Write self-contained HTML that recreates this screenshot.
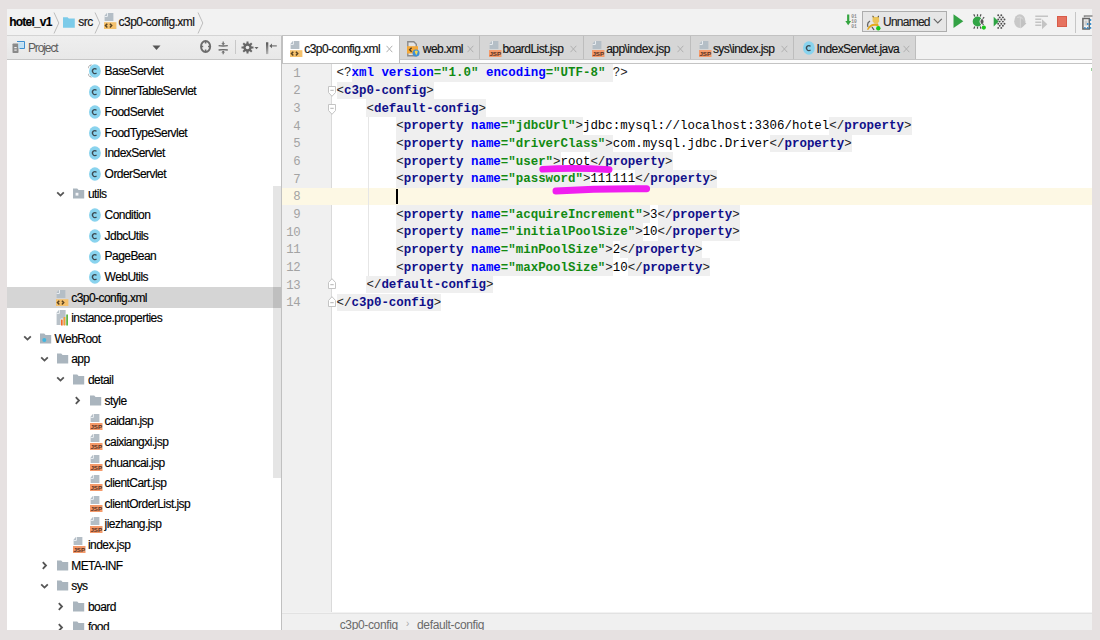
<!DOCTYPE html><html><head><meta charset="utf-8"><style>
*{margin:0;padding:0;box-sizing:border-box}
html,body{width:1100px;height:640px;overflow:hidden;background:#e6e1e1;font-family:"Liberation Sans",sans-serif}
.a{position:absolute}
.ui{font-family:"Liberation Sans",sans-serif;font-size:12px;letter-spacing:-0.55px;color:#000;-webkit-text-stroke:0.15px currentColor;white-space:nowrap;line-height:14px}
.code{font-family:"Liberation Mono",monospace;font-size:12.445px;white-space:pre;line-height:17.65px;color:#000}
.tn{color:#10108a;font-weight:bold}
.an{color:#0000ff;font-weight:bold}
.av{color:#128a12;font-weight:bold}
.br{color:#222}
.ln{font-family:"Liberation Mono",monospace;font-size:12.3px;letter-spacing:-0.45px;color:#a3a3a3;line-height:17.65px;text-align:right;width:20px}
</style></head><body>
<div class="a" style="left:7px;top:9px;width:1085px;height:621px;background:#f2f2f2"></div>
<div class="a" style="left:7px;top:35px;width:275px;height:1px;background:#d4d4d4"></div>
<div class="a" style="left:282px;top:35px;width:810px;height:1px;background:#c2c2c2"></div>
<div class="a" style="left:7px;top:36px;width:275px;height:23px;background:linear-gradient(#eeeeee,#e8e8e8)"></div>
<div class="a" style="left:7px;top:59px;width:275px;height:1px;background:#c6c6c6"></div>
<div class="a" style="left:7px;top:60px;width:275px;height:570px;background:#fff"></div>
<div class="a" style="left:281px;top:36px;width:1px;height:594px;background:#c0c0c0"></div>
<div class="a" style="left:282px;top:36px;width:810px;height:27px;background:#f2f2f2"></div>
<div class="a" style="left:282px;top:63px;width:810px;height:1px;background:#c4c4c4"></div>
<div class="a" style="left:282px;top:64px;width:810px;height:548px;background:#fff"></div>
<div class="a" style="left:282px;top:64px;width:49px;height:548px;background:#f0f0f0"></div>
<div class="a" style="left:331px;top:64px;width:1px;height:548px;background:#dadada"></div>
<div class="a" style="left:282px;top:613px;width:810px;height:17px;background:#f0f0f0;border-top:1px solid #e2e2e2"></div>
<div class="a" style="left:282px;top:187.60px;width:810px;height:17.65px;background:#fdf8e4"></div>
<div class="a" style="left:351.53px;top:64.05px;width:261.34px;height:17.65px;background:#efefef"></div>
<div class="a" style="left:336.60px;top:81.70px;width:97.07px;height:17.65px;background:#efefef"></div>
<div class="a" style="left:366.47px;top:99.35px;width:119.47px;height:17.65px;background:#efefef"></div>
<div class="a" style="left:396.34px;top:117.00px;width:186.67px;height:17.65px;background:#efefef"></div>
<div class="a" style="left:829.42px;top:117.00px;width:82.14px;height:17.65px;background:#efefef"></div>
<div class="a" style="left:396.34px;top:134.65px;width:216.54px;height:17.65px;background:#efefef"></div>
<div class="a" style="left:769.69px;top:134.65px;width:82.14px;height:17.65px;background:#efefef"></div>
<div class="a" style="left:396.34px;top:152.30px;width:164.27px;height:17.65px;background:#efefef"></div>
<div class="a" style="left:590.48px;top:152.30px;width:82.14px;height:17.65px;background:#efefef"></div>
<div class="a" style="left:396.34px;top:169.95px;width:194.14px;height:17.65px;background:#efefef"></div>
<div class="a" style="left:635.28px;top:169.95px;width:82.14px;height:17.65px;background:#efefef"></div>
<div class="a" style="left:396.34px;top:205.25px;width:253.88px;height:17.65px;background:#efefef"></div>
<div class="a" style="left:657.68px;top:205.25px;width:82.14px;height:17.65px;background:#efefef"></div>
<div class="a" style="left:396.34px;top:222.90px;width:246.41px;height:17.65px;background:#efefef"></div>
<div class="a" style="left:657.68px;top:222.90px;width:82.14px;height:17.65px;background:#efefef"></div>
<div class="a" style="left:396.34px;top:240.55px;width:216.54px;height:17.65px;background:#efefef"></div>
<div class="a" style="left:620.35px;top:240.55px;width:82.14px;height:17.65px;background:#efefef"></div>
<div class="a" style="left:396.34px;top:258.20px;width:216.54px;height:17.65px;background:#efefef"></div>
<div class="a" style="left:627.81px;top:258.20px;width:82.14px;height:17.65px;background:#efefef"></div>
<div class="a" style="left:366.47px;top:275.85px;width:126.94px;height:17.65px;background:#efefef"></div>
<div class="a" style="left:336.60px;top:293.50px;width:104.54px;height:17.65px;background:#efefef"></div>
<div class="a code" style="left:336.6px;top:65.45px"><span class="br">&lt;?</span><span class="an">xml</span> <span class="an">version</span><span class="av">=&quot;1.0&quot;</span> <span class="an">encoding</span><span class="av">=&quot;UTF-8&quot;</span> <span class="br">?&gt;</span></div>
<div class="a ln" style="left:279.2px;top:65.75px;width:21px">1</div>
<div class="a code" style="left:336.6px;top:83.10px"><span class="br">&lt;</span><span class="tn">c3p0-config</span><span class="br">&gt;</span></div>
<div class="a ln" style="left:279.2px;top:83.40px;width:21px">2</div>
<div class="a code" style="left:336.6px;top:100.75px">    <span class="br">&lt;</span><span class="tn">default-config</span><span class="br">&gt;</span></div>
<div class="a ln" style="left:279.2px;top:101.05px;width:21px">3</div>
<div class="a code" style="left:336.6px;top:118.40px">        <span class="br">&lt;</span><span class="tn">property</span> <span class="an">name</span><span class="av">=&quot;jdbcUrl&quot;</span><span class="br">&gt;</span>jdbc:mysql://localhost:3306/hotel<span class="br">&lt;/</span><span class="tn">property</span><span class="br">&gt;</span></div>
<div class="a ln" style="left:279.2px;top:118.70px;width:21px">4</div>
<div class="a code" style="left:336.6px;top:136.05px">        <span class="br">&lt;</span><span class="tn">property</span> <span class="an">name</span><span class="av">=&quot;driverClass&quot;</span><span class="br">&gt;</span>com.mysql.jdbc.Driver<span class="br">&lt;/</span><span class="tn">property</span><span class="br">&gt;</span></div>
<div class="a ln" style="left:279.2px;top:136.35px;width:21px">5</div>
<div class="a code" style="left:336.6px;top:153.70px">        <span class="br">&lt;</span><span class="tn">property</span> <span class="an">name</span><span class="av">=&quot;user&quot;</span><span class="br">&gt;</span>root<span class="br">&lt;/</span><span class="tn">property</span><span class="br">&gt;</span></div>
<div class="a ln" style="left:279.2px;top:154.00px;width:21px">6</div>
<div class="a code" style="left:336.6px;top:171.35px">        <span class="br">&lt;</span><span class="tn">property</span> <span class="an">name</span><span class="av">=&quot;password&quot;</span><span class="br">&gt;</span>111111<span class="br">&lt;/</span><span class="tn">property</span><span class="br">&gt;</span></div>
<div class="a ln" style="left:279.2px;top:171.65px;width:21px">7</div>
<div class="a code" style="left:336.6px;top:189.00px"></div>
<div class="a ln" style="left:279.2px;top:189.30px;width:21px">8</div>
<div class="a code" style="left:336.6px;top:206.65px">        <span class="br">&lt;</span><span class="tn">property</span> <span class="an">name</span><span class="av">=&quot;acquireIncrement&quot;</span><span class="br">&gt;</span>3<span class="br">&lt;/</span><span class="tn">property</span><span class="br">&gt;</span></div>
<div class="a ln" style="left:279.2px;top:206.95px;width:21px">9</div>
<div class="a code" style="left:336.6px;top:224.30px">        <span class="br">&lt;</span><span class="tn">property</span> <span class="an">name</span><span class="av">=&quot;initialPoolSize&quot;</span><span class="br">&gt;</span>10<span class="br">&lt;/</span><span class="tn">property</span><span class="br">&gt;</span></div>
<div class="a ln" style="left:279.2px;top:224.60px;width:21px">10</div>
<div class="a code" style="left:336.6px;top:241.95px">        <span class="br">&lt;</span><span class="tn">property</span> <span class="an">name</span><span class="av">=&quot;minPoolSize&quot;</span><span class="br">&gt;</span>2<span class="br">&lt;/</span><span class="tn">property</span><span class="br">&gt;</span></div>
<div class="a ln" style="left:279.2px;top:242.25px;width:21px">11</div>
<div class="a code" style="left:336.6px;top:259.60px">        <span class="br">&lt;</span><span class="tn">property</span> <span class="an">name</span><span class="av">=&quot;maxPoolSize&quot;</span><span class="br">&gt;</span>10<span class="br">&lt;/</span><span class="tn">property</span><span class="br">&gt;</span></div>
<div class="a ln" style="left:279.2px;top:259.90px;width:21px">12</div>
<div class="a code" style="left:336.6px;top:277.25px">    <span class="br">&lt;/</span><span class="tn">default-config</span><span class="br">&gt;</span></div>
<div class="a ln" style="left:279.2px;top:277.55px;width:21px">13</div>
<div class="a code" style="left:336.6px;top:294.90px"><span class="br">&lt;/</span><span class="tn">c3p0-config</span><span class="br">&gt;</span></div>
<div class="a ln" style="left:279.2px;top:295.20px;width:21px">14</div>
<div class="a" style="left:395.5px;top:188.60px;width:2px;height:15.65px;background:#000"></div>
<div class="a" style="left:7px;top:60px;width:274px;height:570px;overflow:hidden">
<svg class="a" style="left:82.40px;top:4.00px" width="12" height="14" viewBox="0 0 12 14"><ellipse cx="5.9" cy="7" rx="5.9" ry="6.8" fill="#89d3ee"/><path d="M7.5 5.4 A2.3 2.5 0 1 0 7.5 8.8" stroke="#3b4a52" stroke-width="1.3" fill="none"/></svg>
<svg class="a" style="left:81.30px;top:4.00px" width="5" height="14" viewBox="0 0 5 14"><path d="M3.5 0.8 A5.6 6.4 0 0 0 3.5 13.2" stroke="#9a9a9a" stroke-width="1" fill="none"/></svg>
<div class="a ui" style="left:97.60px;top:3.74px">BaseServlet</div>
<svg class="a" style="left:82.40px;top:24.62px" width="12" height="14" viewBox="0 0 12 14"><ellipse cx="5.9" cy="7" rx="5.9" ry="6.8" fill="#89d3ee"/><path d="M7.5 5.4 A2.3 2.5 0 1 0 7.5 8.8" stroke="#3b4a52" stroke-width="1.3" fill="none"/></svg>
<div class="a ui" style="left:97.60px;top:24.36px">DinnerTableServlet</div>
<svg class="a" style="left:82.40px;top:45.24px" width="12" height="14" viewBox="0 0 12 14"><ellipse cx="5.9" cy="7" rx="5.9" ry="6.8" fill="#89d3ee"/><path d="M7.5 5.4 A2.3 2.5 0 1 0 7.5 8.8" stroke="#3b4a52" stroke-width="1.3" fill="none"/></svg>
<div class="a ui" style="left:97.60px;top:44.98px">FoodServlet</div>
<svg class="a" style="left:82.40px;top:65.86px" width="12" height="14" viewBox="0 0 12 14"><ellipse cx="5.9" cy="7" rx="5.9" ry="6.8" fill="#89d3ee"/><path d="M7.5 5.4 A2.3 2.5 0 1 0 7.5 8.8" stroke="#3b4a52" stroke-width="1.3" fill="none"/></svg>
<div class="a ui" style="left:97.60px;top:65.60px">FoodTypeServlet</div>
<svg class="a" style="left:82.40px;top:86.48px" width="12" height="14" viewBox="0 0 12 14"><ellipse cx="5.9" cy="7" rx="5.9" ry="6.8" fill="#89d3ee"/><path d="M7.5 5.4 A2.3 2.5 0 1 0 7.5 8.8" stroke="#3b4a52" stroke-width="1.3" fill="none"/></svg>
<div class="a ui" style="left:97.60px;top:86.22px">IndexServlet</div>
<svg class="a" style="left:82.40px;top:107.10px" width="12" height="14" viewBox="0 0 12 14"><ellipse cx="5.9" cy="7" rx="5.9" ry="6.8" fill="#89d3ee"/><path d="M7.5 5.4 A2.3 2.5 0 1 0 7.5 8.8" stroke="#3b4a52" stroke-width="1.3" fill="none"/></svg>
<div class="a ui" style="left:97.60px;top:106.84px">OrderServlet</div>
<svg class="a" style="left:49.20px;top:130.73px" width="9" height="7" viewBox="0 0 9 7"><path d="M1.2 1.3 L4.5 4.6 L7.8 1.3" stroke="#555" stroke-width="1.8" fill="none"/></svg>
<svg class="a" style="left:66.20px;top:128.42px" width="12" height="11" viewBox="0 0 12 11"><path d="M0 0.5 H4.2 L5.6 2 H11.2 V10.5 H0 Z" fill="#aab5be"/><rect x="2.6" y="4.8" width="2.8" height="2.8" fill="#f4f6f8"/></svg>
<div class="a ui" style="left:80.90px;top:127.46px">utils</div>
<svg class="a" style="left:82.40px;top:148.34px" width="12" height="14" viewBox="0 0 12 14"><ellipse cx="5.9" cy="7" rx="5.9" ry="6.8" fill="#89d3ee"/><path d="M7.5 5.4 A2.3 2.5 0 1 0 7.5 8.8" stroke="#3b4a52" stroke-width="1.3" fill="none"/></svg>
<div class="a ui" style="left:97.60px;top:148.08px">Condition</div>
<svg class="a" style="left:82.40px;top:168.96px" width="12" height="14" viewBox="0 0 12 14"><ellipse cx="5.9" cy="7" rx="5.9" ry="6.8" fill="#89d3ee"/><path d="M7.5 5.4 A2.3 2.5 0 1 0 7.5 8.8" stroke="#3b4a52" stroke-width="1.3" fill="none"/></svg>
<div class="a ui" style="left:97.60px;top:168.70px">JdbcUtils</div>
<svg class="a" style="left:82.40px;top:189.58px" width="12" height="14" viewBox="0 0 12 14"><ellipse cx="5.9" cy="7" rx="5.9" ry="6.8" fill="#89d3ee"/><path d="M7.5 5.4 A2.3 2.5 0 1 0 7.5 8.8" stroke="#3b4a52" stroke-width="1.3" fill="none"/></svg>
<div class="a ui" style="left:97.60px;top:189.32px">PageBean</div>
<svg class="a" style="left:82.40px;top:210.20px" width="12" height="14" viewBox="0 0 12 14"><ellipse cx="5.9" cy="7" rx="5.9" ry="6.8" fill="#89d3ee"/><path d="M7.5 5.4 A2.3 2.5 0 1 0 7.5 8.8" stroke="#3b4a52" stroke-width="1.3" fill="none"/></svg>
<div class="a ui" style="left:97.60px;top:209.94px">WebUtils</div>
<div class="a" style="left:0px;top:227.02px;width:274px;height:20.62px;background:#d5d5d5"></div>
<svg class="a" style="left:49.20px;top:229.82px" width="13" height="16" viewBox="0 0 13 16"><path d="M2.8 0 H9.4 V8 H0.6 V2.8 Z" fill="#b4bec6"/><path d="M3.4 0 V3.4 H0.6" stroke="#f4f6f8" stroke-width="0.9" fill="none"/><path d="M0.8 2.9 L2.9 0.8 V2.9 Z" fill="#b4bec6"/><rect x="0" y="9.2" width="12.4" height="6.8" fill="#f5c16c"/><path d="M3.3 10.7 L1.5 12.6 L3.3 14.5 M5.9 10.7 L7.7 12.6 L5.9 14.5" stroke="#5a4422" stroke-width="1.5" fill="none"/></svg>
<div class="a ui" style="left:64.20px;top:230.56px">c3p0-config.xml</div>
<svg class="a" style="left:49.20px;top:250.44px" width="13" height="16" viewBox="0 0 13 16"><path d="M2.8 0 H9.6 V15 H0.6 V2.8 Z" fill="#b8c1c8"/><path d="M3.4 0 V3.4 H0.6" stroke="#f4f6f8" stroke-width="0.9" fill="none"/><path d="M0.8 2.9 L2.9 0.8 V2.9 Z" fill="#b8c1c8"/><rect x="4.6" y="8.6" width="2.6" height="7" fill="#fff"/><rect x="5" y="9.5" width="1.7" height="6" fill="#f26b2a"/><rect x="7.6" y="7" width="1.7" height="8.5" fill="#f5a030"/><rect x="10.2" y="4.5" width="1.8" height="11" fill="#5fb546"/></svg>
<div class="a ui" style="left:64.20px;top:251.18px">instance.properties</div>
<svg class="a" style="left:15.80px;top:275.07px" width="9" height="7" viewBox="0 0 9 7"><path d="M1.2 1.3 L4.5 4.6 L7.8 1.3" stroke="#555" stroke-width="1.8" fill="none"/></svg>
<svg class="a" style="left:32.80px;top:272.76px" width="12" height="11" viewBox="0 0 12 11"><path d="M0 0.5 H4.2 L5.6 2 H11.2 V10.5 H0 Z" fill="#aab5be"/><circle cx="4.3" cy="7" r="2" fill="#40b6e0"/></svg>
<div class="a ui" style="left:47.50px;top:271.80px">WebRoot</div>
<svg class="a" style="left:32.50px;top:295.69px" width="9" height="7" viewBox="0 0 9 7"><path d="M1.2 1.3 L4.5 4.6 L7.8 1.3" stroke="#555" stroke-width="1.8" fill="none"/></svg>
<svg class="a" style="left:49.50px;top:293.38px" width="12" height="11" viewBox="0 0 12 11"><path d="M0 0.5 H4.2 L5.6 2 H11.2 V10.5 H0 Z" fill="#aab5be"/></svg>
<div class="a ui" style="left:64.20px;top:292.42px">app</div>
<svg class="a" style="left:49.20px;top:316.31px" width="9" height="7" viewBox="0 0 9 7"><path d="M1.2 1.3 L4.5 4.6 L7.8 1.3" stroke="#555" stroke-width="1.8" fill="none"/></svg>
<svg class="a" style="left:66.20px;top:314.00px" width="12" height="11" viewBox="0 0 12 11"><path d="M0 0.5 H4.2 L5.6 2 H11.2 V10.5 H0 Z" fill="#aab5be"/></svg>
<div class="a ui" style="left:80.90px;top:313.04px">detail</div>
<svg class="a" style="left:66.90px;top:335.93px" width="7" height="9" viewBox="0 0 7 9"><path d="M1.8 1.2 L5 4.5 L1.8 7.8" stroke="#555" stroke-width="1.8" fill="none"/></svg>
<svg class="a" style="left:82.90px;top:334.62px" width="12" height="11" viewBox="0 0 12 11"><path d="M0 0.5 H4.2 L5.6 2 H11.2 V10.5 H0 Z" fill="#aab5be"/></svg>
<div class="a ui" style="left:97.60px;top:333.66px">style</div>
<svg class="a" style="left:82.60px;top:353.54px" width="13" height="16" viewBox="0 0 13 16"><path d="M2.8 0 H9.4 V8 H0.6 V2.8 Z" fill="#b4bec6"/><path d="M3.4 0 V3.4 H0.6" stroke="#f4f6f8" stroke-width="0.9" fill="none"/><path d="M0.8 2.9 L2.9 0.8 V2.9 Z" fill="#b4bec6"/><rect x="0" y="9" width="12.5" height="7" fill="#f49a6a"/><text x="6.25" y="15" font-family="Liberation Sans" font-weight="bold" font-size="6.2" fill="#5b3324" text-anchor="middle" letter-spacing="0">JSP</text></svg>
<div class="a ui" style="left:97.60px;top:354.28px">caidan.jsp</div>
<svg class="a" style="left:82.60px;top:374.16px" width="13" height="16" viewBox="0 0 13 16"><path d="M2.8 0 H9.4 V8 H0.6 V2.8 Z" fill="#b4bec6"/><path d="M3.4 0 V3.4 H0.6" stroke="#f4f6f8" stroke-width="0.9" fill="none"/><path d="M0.8 2.9 L2.9 0.8 V2.9 Z" fill="#b4bec6"/><rect x="0" y="9" width="12.5" height="7" fill="#f49a6a"/><text x="6.25" y="15" font-family="Liberation Sans" font-weight="bold" font-size="6.2" fill="#5b3324" text-anchor="middle" letter-spacing="0">JSP</text></svg>
<div class="a ui" style="left:97.60px;top:374.90px">caixiangxi.jsp</div>
<svg class="a" style="left:82.60px;top:394.78px" width="13" height="16" viewBox="0 0 13 16"><path d="M2.8 0 H9.4 V8 H0.6 V2.8 Z" fill="#b4bec6"/><path d="M3.4 0 V3.4 H0.6" stroke="#f4f6f8" stroke-width="0.9" fill="none"/><path d="M0.8 2.9 L2.9 0.8 V2.9 Z" fill="#b4bec6"/><rect x="0" y="9" width="12.5" height="7" fill="#f49a6a"/><text x="6.25" y="15" font-family="Liberation Sans" font-weight="bold" font-size="6.2" fill="#5b3324" text-anchor="middle" letter-spacing="0">JSP</text></svg>
<div class="a ui" style="left:97.60px;top:395.52px">chuancai.jsp</div>
<svg class="a" style="left:82.60px;top:415.40px" width="13" height="16" viewBox="0 0 13 16"><path d="M2.8 0 H9.4 V8 H0.6 V2.8 Z" fill="#b4bec6"/><path d="M3.4 0 V3.4 H0.6" stroke="#f4f6f8" stroke-width="0.9" fill="none"/><path d="M0.8 2.9 L2.9 0.8 V2.9 Z" fill="#b4bec6"/><rect x="0" y="9" width="12.5" height="7" fill="#f49a6a"/><text x="6.25" y="15" font-family="Liberation Sans" font-weight="bold" font-size="6.2" fill="#5b3324" text-anchor="middle" letter-spacing="0">JSP</text></svg>
<div class="a ui" style="left:97.60px;top:416.14px">clientCart.jsp</div>
<svg class="a" style="left:82.60px;top:436.02px" width="13" height="16" viewBox="0 0 13 16"><path d="M2.8 0 H9.4 V8 H0.6 V2.8 Z" fill="#b4bec6"/><path d="M3.4 0 V3.4 H0.6" stroke="#f4f6f8" stroke-width="0.9" fill="none"/><path d="M0.8 2.9 L2.9 0.8 V2.9 Z" fill="#b4bec6"/><rect x="0" y="9" width="12.5" height="7" fill="#f49a6a"/><text x="6.25" y="15" font-family="Liberation Sans" font-weight="bold" font-size="6.2" fill="#5b3324" text-anchor="middle" letter-spacing="0">JSP</text></svg>
<div class="a ui" style="left:97.60px;top:436.76px">clientOrderList.jsp</div>
<svg class="a" style="left:82.60px;top:456.64px" width="13" height="16" viewBox="0 0 13 16"><path d="M2.8 0 H9.4 V8 H0.6 V2.8 Z" fill="#b4bec6"/><path d="M3.4 0 V3.4 H0.6" stroke="#f4f6f8" stroke-width="0.9" fill="none"/><path d="M0.8 2.9 L2.9 0.8 V2.9 Z" fill="#b4bec6"/><rect x="0" y="9" width="12.5" height="7" fill="#f49a6a"/><text x="6.25" y="15" font-family="Liberation Sans" font-weight="bold" font-size="6.2" fill="#5b3324" text-anchor="middle" letter-spacing="0">JSP</text></svg>
<div class="a ui" style="left:97.60px;top:457.38px">jiezhang.jsp</div>
<svg class="a" style="left:65.90px;top:477.26px" width="13" height="16" viewBox="0 0 13 16"><path d="M2.8 0 H9.4 V8 H0.6 V2.8 Z" fill="#b4bec6"/><path d="M3.4 0 V3.4 H0.6" stroke="#f4f6f8" stroke-width="0.9" fill="none"/><path d="M0.8 2.9 L2.9 0.8 V2.9 Z" fill="#b4bec6"/><rect x="0" y="9" width="12.5" height="7" fill="#f49a6a"/><text x="6.25" y="15" font-family="Liberation Sans" font-weight="bold" font-size="6.2" fill="#5b3324" text-anchor="middle" letter-spacing="0">JSP</text></svg>
<div class="a ui" style="left:80.90px;top:478.00px">index.jsp</div>
<svg class="a" style="left:33.50px;top:500.89px" width="7" height="9" viewBox="0 0 7 9"><path d="M1.8 1.2 L5 4.5 L1.8 7.8" stroke="#555" stroke-width="1.8" fill="none"/></svg>
<svg class="a" style="left:49.50px;top:499.58px" width="12" height="11" viewBox="0 0 12 11"><path d="M0 0.5 H4.2 L5.6 2 H11.2 V10.5 H0 Z" fill="#aab5be"/></svg>
<div class="a ui" style="left:64.20px;top:498.62px">META-INF</div>
<svg class="a" style="left:32.50px;top:522.51px" width="9" height="7" viewBox="0 0 9 7"><path d="M1.2 1.3 L4.5 4.6 L7.8 1.3" stroke="#555" stroke-width="1.8" fill="none"/></svg>
<svg class="a" style="left:49.50px;top:520.20px" width="12" height="11" viewBox="0 0 12 11"><path d="M0 0.5 H4.2 L5.6 2 H11.2 V10.5 H0 Z" fill="#aab5be"/></svg>
<div class="a ui" style="left:64.20px;top:519.24px">sys</div>
<svg class="a" style="left:50.20px;top:542.13px" width="7" height="9" viewBox="0 0 7 9"><path d="M1.8 1.2 L5 4.5 L1.8 7.8" stroke="#555" stroke-width="1.8" fill="none"/></svg>
<svg class="a" style="left:66.20px;top:540.82px" width="12" height="11" viewBox="0 0 12 11"><path d="M0 0.5 H4.2 L5.6 2 H11.2 V10.5 H0 Z" fill="#aab5be"/></svg>
<div class="a ui" style="left:80.90px;top:539.86px">board</div>
<svg class="a" style="left:50.20px;top:562.75px" width="7" height="9" viewBox="0 0 7 9"><path d="M1.8 1.2 L5 4.5 L1.8 7.8" stroke="#555" stroke-width="1.8" fill="none"/></svg>
<svg class="a" style="left:66.20px;top:561.44px" width="12" height="11" viewBox="0 0 12 11"><path d="M0 0.5 H4.2 L5.6 2 H11.2 V10.5 H0 Z" fill="#aab5be"/></svg>
<div class="a ui" style="left:80.90px;top:560.48px">food</div>
<div class="a" style="left:266px;top:125.7px;width:8px;height:292px;background:rgba(0,0,0,0.1)"></div>
</div>
<div class="a ui" style="left:9.3px;top:15.2px;font-weight:bold;color:#000;letter-spacing:-0.8px">hotel_v1</div>
<svg class="a" style="left:53.00px;top:11.50px" width="7" height="22" viewBox="0 0 7 22"><path d="M1 0.5 L5.8 11 L1 21.5" stroke="#bdbdbd" stroke-width="1" fill="none"/></svg>
<svg class="a" style="left:63.00px;top:16.60px" width="12" height="11" viewBox="0 0 12 11"><path d="M0 0.3 H4.6 L5.8 1.6 H11.8 V10.8 H0 Z" fill="#7ccbe9"/></svg>
<div class="a ui" style="left:78.3px;top:15.2px;color:#111">src</div>
<svg class="a" style="left:94.00px;top:11.50px" width="7" height="22" viewBox="0 0 7 22"><path d="M1 0.5 L5.8 11 L1 21.5" stroke="#bdbdbd" stroke-width="1" fill="none"/></svg>
<svg class="a" style="left:104.00px;top:12.80px" width="13" height="16" viewBox="0 0 13 16"><path d="M2.8 0 H9.4 V8 H0.6 V2.8 Z" fill="#b4bec6"/><path d="M3.4 0 V3.4 H0.6" stroke="#f4f6f8" stroke-width="0.9" fill="none"/><path d="M0.8 2.9 L2.9 0.8 V2.9 Z" fill="#b4bec6"/><rect x="0" y="9.2" width="12.4" height="6.8" fill="#f5c16c"/><path d="M3.3 10.7 L1.5 12.6 L3.3 14.5 M5.9 10.7 L7.7 12.6 L5.9 14.5" stroke="#5a4422" stroke-width="1.5" fill="none"/></svg>
<div class="a ui" style="left:118.6px;top:15.2px;color:#111">c3p0-config.xml</div>
<svg class="a" style="left:196.80px;top:11.50px" width="7" height="22" viewBox="0 0 7 22"><path d="M1 0.5 L5.8 11 L1 21.5" stroke="#bdbdbd" stroke-width="1" fill="none"/></svg>
<svg class="a" style="left:11.50px;top:40.50px" width="13" height="13" viewBox="0 0 13 13"><rect x="0.5" y="2.5" width="6" height="9.5" rx="0.8" fill="#8a8a8a"/><rect x="2.3" y="6" width="2.4" height="1.2" fill="#eee"/><rect x="2.3" y="8.5" width="2.4" height="1.2" fill="#eee"/><path d="M5 0.5 H12.5 V7.5 H7.5" stroke="#3d8fd1" stroke-width="1" fill="none"/><rect x="6.3" y="1.5" width="5.5" height="5.5" fill="#bfe0f5"/></svg>
<div class="a ui" style="left:27.9px;top:40.8px;color:#5c5c5c;letter-spacing:-1.1px;-webkit-text-stroke:0;top:41.2px">Project</div>
<svg class="a" style="left:152.00px;top:44.50px" width="9" height="6" viewBox="0 0 9 6"><path d="M0.5 0.5 H8.5 L4.5 5 Z" fill="#555"/></svg>
<svg class="a" style="left:199.50px;top:40.30px" width="12" height="14" viewBox="0 0 12 14"><ellipse cx="5.6" cy="6.5" rx="4.6" ry="5.5" stroke="#6c6c6c" stroke-width="1.9" fill="none"/><path d="M5.6 1.5 V3.6 M5.6 9.4 V11.5 M1.2 6.5 H3.2 M8 6.5 H10" stroke="#6c6c6c" stroke-width="1.6"/></svg>
<svg class="a" style="left:217.50px;top:40.50px" width="11" height="14" viewBox="0 0 11 14"><path d="M0.6 4.6 Q5 5.4 9.8 4.6 M0.6 9 Q5 8.2 9.8 9" stroke="#6a6a6a" stroke-width="1.3" fill="none"/><path d="M5.2 0.6 V2.8 M5.2 11 V13.2" stroke="#777" stroke-width="1.3"/><path d="M3.3 2.3 H7.1 L5.2 4.3 Z M3.3 11.5 H7.1 L5.2 9.5 Z" fill="#6a6a6a"/></svg>
<div class="a" style="left:235px;top:40px;width:1px;height:14px;background:#c8c8c8"></div>
<svg class="a" style="left:241.00px;top:40.50px" width="18" height="13" viewBox="0 0 18 13"><g fill="#666"><circle cx="6.5" cy="6.5" r="4.2"/><rect x="5.5" y="0.5" width="2" height="12"/><rect x="0.5" y="5.5" width="12" height="2"/><rect x="5.5" y="0.5" width="2" height="12" transform="rotate(45 6.5 6.5)"/><rect x="5.5" y="0.5" width="2" height="12" transform="rotate(-45 6.5 6.5)"/></g><circle cx="6.5" cy="6.5" r="1.8" fill="#ececec"/><path d="M13.5 6 H17.5 L15.5 8.3 Z" fill="#666"/></svg>
<svg class="a" style="left:265.00px;top:40.50px" width="13" height="14" viewBox="0 0 13 14"><defs><linearGradient id="pg" x1="0" y1="0" x2="0" y2="1"><stop offset="0" stop-color="#555"/><stop offset="1" stop-color="#b5b5b5"/></linearGradient></defs><rect x="1" y="1.3" width="2.3" height="11.8" fill="url(#pg)"/><path d="M6 4.9 H11.8" stroke="#666" stroke-width="1.1"/><path d="M4.3 4.9 L7 2.6 V7.2 Z" fill="#666"/></svg>
<svg class="a" style="left:844.00px;top:13.00px" width="15" height="18" viewBox="0 0 15 18"><path d="M4.2 1.5 V9" stroke="#35a541" stroke-width="2.2"/><path d="M1.3 8 H7.1 L4.2 12.2 Z" fill="#35a541"/><g font-family="Liberation Mono" font-size="4.6" font-weight="bold" fill="#8a8a8a"><text x="7.3" y="5">01</text><text x="7.3" y="9.8">10</text><text x="7.3" y="14.6">01</text></g></svg>
<div class="a" style="left:862px;top:11px;width:84.5px;height:21px;background:#e6e6e6;border:1px solid #adadad"></div>
<svg class="a" style="left:865.50px;top:14.50px" width="16" height="17" viewBox="0 0 16 17"><path d="M4 6 Q0.5 8 2 12" stroke="#666" stroke-width="1.3" fill="none"/><path d="M6.5 2 L7 0.6 L8.5 2 H11.2 L12.6 0.6 L13 2.5 L13.2 6.5 L11.5 8.5 H8.5 L6.6 6.5 Z" fill="#ebc45a"/><path d="M6.8 0.8 L7.3 2.3 M12.5 0.8 L12.2 2.3" stroke="#444" stroke-width="1"/><path d="M1 14.5 Q3 9.5 8 8.8 L12 8.5 L13 11.5 Q8 10 5 12 Q3 13.5 2.2 15 Z" fill="#e3a91b"/><path d="M6 12 L8 15" stroke="#555" stroke-width="1.3"/><circle cx="12.3" cy="13.2" r="2.2" fill="#19c81b"/></svg>
<div class="a ui" style="left:883px;top:15.3px;color:#222;letter-spacing:-0.75px">Unnamed</div>
<svg class="a" style="left:933.00px;top:18.30px" width="10" height="7" viewBox="0 0 10 7"><path d="M0.8 0.8 L4.8 5 L8.8 0.8" stroke="#666" stroke-width="1.1" fill="none"/></svg>
<svg class="a" style="left:953.00px;top:14.30px" width="11" height="15" viewBox="0 0 11 15"><path d="M0.5 0.3 L10.3 7.2 L0.5 14.1 Z" fill="#33a244"/></svg>
<svg class="a" style="left:972.00px;top:13.00px" width="15" height="18" viewBox="0 0 15 18"><path d="M9.23 5.21 A4.9 4.9 0 1 0 9.23 11.79 A4 4 0 0 1 9.23 5.21 Z" fill="#32a546"/><ellipse cx="10" cy="8.5" rx="1.5" ry="2.6" fill="#555"/><path d="M1.8 1.3 L2.8 3.5 M5.5 1.2 V3.3 M9 1.3 L8.2 3.5 M1.8 15.7 L2.8 13.5 M5.5 15.8 V13.7 M9 15.7 L8.2 13.5 M10.7 5.6 L12.2 4.2 M10.7 11.2 L11.5 12.2" stroke="#505050" stroke-width="1.2" fill="none"/><circle cx="11.85" cy="14.6" r="2.1" fill="#19c81b"/></svg>
<svg class="a" style="left:993.00px;top:13.00px" width="14" height="18" viewBox="0 0 14 18"><path d="M0.7 3.8 L5.7 8.6 L0.7 13.4 Z" fill="#2ea444"/><g fill="#505050"><circle cx="5.2" cy="2.3" r="0.95"/><circle cx="8.3" cy="2.3" r="0.95"/><circle cx="6.7" cy="4.4" r="0.95"/><circle cx="9.9" cy="4.4" r="0.95"/><circle cx="5.2" cy="6.5" r="0.95"/><circle cx="8.3" cy="6.5" r="0.95"/><circle cx="11.5" cy="6.5" r="0.95"/><circle cx="6.7" cy="8.6" r="0.95"/><circle cx="9.9" cy="8.6" r="0.95"/><circle cx="5.2" cy="10.7" r="0.95"/><circle cx="8.3" cy="10.7" r="0.95"/><circle cx="11.5" cy="10.7" r="0.95"/><circle cx="6.7" cy="12.8" r="0.95"/><circle cx="9.9" cy="12.8" r="0.95"/><circle cx="5.2" cy="14.9" r="0.95"/><circle cx="8.3" cy="14.9" r="0.95"/></g></svg>
<svg class="a" style="left:1014.00px;top:14.00px" width="14" height="16" viewBox="0 0 14 16"><ellipse cx="5.8" cy="7.2" rx="5.6" ry="6.9" fill="#c8c8c8"/><path d="M6.3 4 L12.4 9.6 L6.3 14.4 Z" fill="#c2c2c2"/><path d="M3.2 3.5 Q6 1.8 8.5 4.5 M6.3 3.5 V14" stroke="#dedede" stroke-width="0.8" fill="none"/></svg>
<svg class="a" style="left:1035.00px;top:15.00px" width="14" height="16" viewBox="0 0 14 16"><path d="M0.3 1.3 H13 M0.3 4.3 H6.3 M0.3 7.3 H6.3 M0.3 10.3 H6.3" stroke="#c4c4c4" stroke-width="1.5"/><path d="M7 4.2 L12.3 9.2 L7 14.2 Z" fill="#c4c4c4"/></svg>
<div class="a" style="left:1057px;top:15.6px;width:9.8px;height:11.6px;background:#e6725f;border:0.8px solid #d85c4a"></div>
<div class="a" style="left:1075px;top:12px;width:1px;height:21px;background:#c6c6c6"></div>
<svg class="a" style="left:1081.50px;top:14.50px" width="11" height="16" viewBox="0 0 11 16"><path d="M2.5 2.3 V1 H10.5" stroke="#8a8a8a" stroke-width="1.5" fill="none"/><rect x="0.9" y="3.5" width="6.4" height="10.5" fill="none" stroke="#666" stroke-width="1.5"/><rect x="2.5" y="5.5" width="3" height="5" fill="#ccc"/><g fill="#2e86c8"><circle cx="8.5" cy="5" r="0.9"/><circle cx="5.7" cy="9" r="0.9"/><circle cx="8.5" cy="9" r="0.9"/><circle cx="2.9" cy="12.9" r="0.9"/><circle cx="5.7" cy="12.9" r="0.9"/><circle cx="8.5" cy="12.9" r="0.9"/></g></svg>
<div class="a" style="left:282px;top:59px;width:810px;height:1px;background:#c6c6c6"></div>
<div class="a" style="left:282px;top:60px;width:810px;height:3px;background:#fcfcfc"></div>
<div class="a" style="left:282.00px;top:36px;width:117.50px;height:27px;background:#fff;border-left:1px solid #c0c0c0;border-right:1px solid #c0c0c0"></div>
<svg class="a" style="left:290.30px;top:40.50px" width="13" height="16" viewBox="0 0 13 16"><path d="M2.8 0 H9.4 V8 H0.6 V2.8 Z" fill="#b4bec6"/><path d="M3.4 0 V3.4 H0.6" stroke="#f4f6f8" stroke-width="0.9" fill="none"/><path d="M0.8 2.9 L2.9 0.8 V2.9 Z" fill="#b4bec6"/><rect x="0" y="9.2" width="12.4" height="6.8" fill="#f5c16c"/><path d="M3.3 10.7 L1.5 12.6 L3.3 14.5 M5.9 10.7 L7.7 12.6 L5.9 14.5" stroke="#5a4422" stroke-width="1.5" fill="none"/></svg>
<div class="a ui" style="left:304.30px;top:42px;color:#111">c3p0-config.xml</div>
<svg class="a" style="left:386.00px;top:45.00px" width="7" height="8" viewBox="0 0 7 8"><path d="M0.5 0.8 L6.3 7.2 M6.3 0.8 L0.5 7.2" stroke="#b0b0b0" stroke-width="1"/></svg>
<div class="a" style="left:399.50px;top:36px;width:80.70px;height:23px;background:#d6d6d6;border-right:1px solid #bdbdbd"></div>
<svg class="a" style="left:407.30px;top:40.50px" width="14" height="16" viewBox="0 0 14 16"><path d="M0.8 0.8 H6.8 L9.3 3.3 V14.8 H0.8 Z" fill="#e4e4e4" stroke="#8a8a8a" stroke-width="1.4"/><rect x="0" y="5.2" width="11" height="7.3" fill="#f4a838"/><path d="M4.6 6.8 L2.6 8.8 L4.6 10.8" stroke="#4a3a20" stroke-width="1.3" fill="none"/><circle cx="9" cy="12" r="3.5" fill="#3d8fd5"/><path d="M7.6 10 Q9.5 8.8 10.8 10.2 Q10.6 12 9.2 14.2 Q8.2 12.4 7.6 10 Z" fill="#f8d84a"/></svg>
<div class="a ui" style="left:422.80px;top:42px;color:#111">web.xml</div>
<svg class="a" style="left:466.70px;top:45.00px" width="7" height="8" viewBox="0 0 7 8"><path d="M0.5 0.8 L6.3 7.2 M6.3 0.8 L0.5 7.2" stroke="#b0b0b0" stroke-width="1"/></svg>
<div class="a" style="left:480.20px;top:36px;width:103.70px;height:23px;background:#d6d6d6;border-right:1px solid #bdbdbd"></div>
<svg class="a" style="left:488.50px;top:40.50px" width="13" height="16" viewBox="0 0 13 16"><path d="M2.8 0 H9.4 V8 H0.6 V2.8 Z" fill="#b4bec6"/><path d="M3.4 0 V3.4 H0.6" stroke="#f4f6f8" stroke-width="0.9" fill="none"/><path d="M0.8 2.9 L2.9 0.8 V2.9 Z" fill="#b4bec6"/><rect x="0" y="9" width="12.5" height="7" fill="#f49a6a"/><text x="6.25" y="15" font-family="Liberation Sans" font-weight="bold" font-size="6.2" fill="#5b3324" text-anchor="middle" letter-spacing="0">JSP</text></svg>
<div class="a ui" style="left:502.50px;top:42px;color:#111">boardList.jsp</div>
<svg class="a" style="left:570.40px;top:45.00px" width="7" height="8" viewBox="0 0 7 8"><path d="M0.5 0.8 L6.3 7.2 M6.3 0.8 L0.5 7.2" stroke="#b0b0b0" stroke-width="1"/></svg>
<div class="a" style="left:583.90px;top:36px;width:106.70px;height:23px;background:#d6d6d6;border-right:1px solid #bdbdbd"></div>
<svg class="a" style="left:592.20px;top:40.50px" width="13" height="16" viewBox="0 0 13 16"><path d="M2.8 0 H9.4 V8 H0.6 V2.8 Z" fill="#b4bec6"/><path d="M3.4 0 V3.4 H0.6" stroke="#f4f6f8" stroke-width="0.9" fill="none"/><path d="M0.8 2.9 L2.9 0.8 V2.9 Z" fill="#b4bec6"/><rect x="0" y="9" width="12.5" height="7" fill="#f49a6a"/><text x="6.25" y="15" font-family="Liberation Sans" font-weight="bold" font-size="6.2" fill="#5b3324" text-anchor="middle" letter-spacing="0">JSP</text></svg>
<div class="a ui" style="left:606.20px;top:42px;color:#111">app\index.jsp</div>
<svg class="a" style="left:677.10px;top:45.00px" width="7" height="8" viewBox="0 0 7 8"><path d="M0.5 0.8 L6.3 7.2 M6.3 0.8 L0.5 7.2" stroke="#b0b0b0" stroke-width="1"/></svg>
<div class="a" style="left:690.60px;top:36px;width:103.60px;height:23px;background:#d6d6d6;border-right:1px solid #bdbdbd"></div>
<svg class="a" style="left:698.90px;top:40.50px" width="13" height="16" viewBox="0 0 13 16"><path d="M2.8 0 H9.4 V8 H0.6 V2.8 Z" fill="#b4bec6"/><path d="M3.4 0 V3.4 H0.6" stroke="#f4f6f8" stroke-width="0.9" fill="none"/><path d="M0.8 2.9 L2.9 0.8 V2.9 Z" fill="#b4bec6"/><rect x="0" y="9" width="12.5" height="7" fill="#f49a6a"/><text x="6.25" y="15" font-family="Liberation Sans" font-weight="bold" font-size="6.2" fill="#5b3324" text-anchor="middle" letter-spacing="0">JSP</text></svg>
<div class="a ui" style="left:712.90px;top:42px;color:#111">sys\index.jsp</div>
<svg class="a" style="left:780.70px;top:45.00px" width="7" height="8" viewBox="0 0 7 8"><path d="M0.5 0.8 L6.3 7.2 M6.3 0.8 L0.5 7.2" stroke="#b0b0b0" stroke-width="1"/></svg>
<div class="a" style="left:794.20px;top:36px;width:122.20px;height:23px;background:#d6d6d6;border-right:1px solid #bdbdbd"></div>
<svg class="a" style="left:802.50px;top:40.80px" width="12" height="14" viewBox="0 0 12 14"><ellipse cx="5.9" cy="7" rx="5.9" ry="6.8" fill="#89d3ee"/><path d="M7.5 5.4 A2.3 2.5 0 1 0 7.5 8.8" stroke="#3b4a52" stroke-width="1.3" fill="none"/></svg>
<div class="a ui" style="left:816.50px;top:42px;color:#111">IndexServlet.java</div>
<svg class="a" style="left:902.90px;top:45.00px" width="7" height="8" viewBox="0 0 7 8"><path d="M0.5 0.8 L6.3 7.2 M6.3 0.8 L0.5 7.2" stroke="#b0b0b0" stroke-width="1"/></svg>
<div class="a" style="left:282px;top:614px;width:810px;height:16px;overflow:hidden">
<div class="a ui" style="left:57.7px;top:4px;color:#6a6a6a;letter-spacing:-0.35px;-webkit-text-stroke:0">c3p0-config</div>
<div class="a ui" style="left:124px;top:3px;color:#aaa;font-size:10px;-webkit-text-stroke:0">›</div>
<div class="a ui" style="left:135px;top:4px;color:#6a6a6a;letter-spacing:-0.35px;-webkit-text-stroke:0">default-config</div>
</div>
<div class="a" style="left:368px;top:117.00px;width:1px;height:158.85px;background:#e6e6e6"></div>
<svg class="a" style="left:327.80px;top:86.00px" width="8" height="11" viewBox="0 0 8 11"><path d="M0.5 0.5 H7.5 V6.5 L4 10.3 L0.5 6.5 Z" fill="#fff" stroke="#bdbdbd" stroke-width="0.9"/><path d="M2.3 4.3 H5.7" stroke="#aaa" stroke-width="0.9"/></svg>
<svg class="a" style="left:327.80px;top:103.65px" width="8" height="11" viewBox="0 0 8 11"><path d="M0.5 0.5 H7.5 V6.5 L4 10.3 L0.5 6.5 Z" fill="#fff" stroke="#bdbdbd" stroke-width="0.9"/><path d="M2.3 4.3 H5.7" stroke="#aaa" stroke-width="0.9"/></svg>
<svg class="a" style="left:327.80px;top:278.35px" width="8" height="11" viewBox="0 0 8 11"><path d="M0.5 10.5 H7.5 V4.5 L4 0.7 L0.5 4.5 Z" fill="#fff" stroke="#bdbdbd" stroke-width="0.9"/><path d="M2.3 6.7 H5.7" stroke="#aaa" stroke-width="0.9"/></svg>
<svg class="a" style="left:327.80px;top:296.00px" width="8" height="11" viewBox="0 0 8 11"><path d="M0.5 10.5 H7.5 V4.5 L4 0.7 L0.5 4.5 Z" fill="#fff" stroke="#bdbdbd" stroke-width="0.9"/><path d="M2.3 6.7 H5.7" stroke="#aaa" stroke-width="0.9"/></svg>
<div class="a" style="left:1091px;top:67.5px;width:1px;height:3.5px;background:#9ad29a"></div>
<svg class="a" style="left:0;top:0" width="1100" height="640"><path d="M542.6 169.2 Q575 167.3 609.2 169.6" stroke="#f01ef0" stroke-width="6.6" stroke-linecap="round" fill="none"/><path d="M556 191 Q600 188.3 646.6 188.8" stroke="#f01ef0" stroke-width="7" stroke-linecap="round" fill="none"/></svg>
</body></html>
